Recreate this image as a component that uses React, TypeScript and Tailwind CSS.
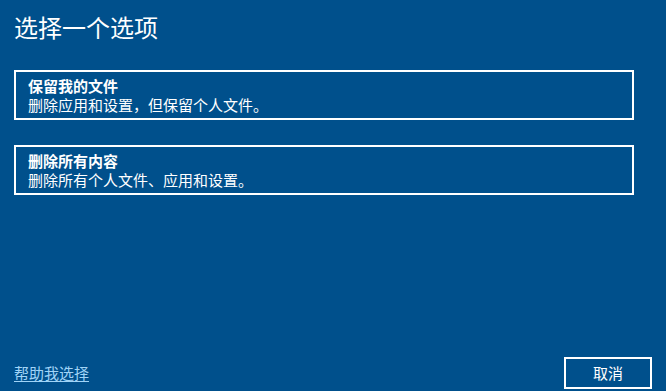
import React from "react";

const font = {
  fontFamily: '"Noto Sans CJK SC", "Noto Sans", sans-serif',
};

function Option({ title, desc }: { title: string; desc: string }) {
  return (
    <button className="w-[620px] h-[50px] border-2 border-white px-[12px] py-[4px] text-left text-white flex flex-col">
      <span className="text-[15px] leading-[19px] font-bold">{title}</span>
      <span className="text-[15px] leading-[19px]">{desc}</span>
    </button>
  );
}

export default function App() {
  return (
    <div
      className="h-[391px] w-[666px] bg-[#00508c] text-white flex flex-col pl-[14px] pr-[14px] pb-[2px]"
      style={font}
    >
      <h1 className="text-[24px] leading-[32px] mt-[11px]">选择一个选项</h1>
      <div className="mt-[27px] flex flex-col gap-[25px]">
        <Option title="保留我的文件" desc="删除应用和设置，但保留个人文件。" />
        <Option title="删除所有内容" desc="删除所有个人文件、应用和设置。" />
      </div>
      <div className="mt-auto flex items-end justify-between">
        <a
          href="#"
          className="mb-[6px] text-[15px] leading-[20px] text-[#a0d4f7] underline underline-offset-2"
        >
          帮助我选择
        </a>
        <button className="w-[88px] h-[32px] border-2 border-white text-[15px] text-white">
          取消
        </button>
      </div>
    </div>
  );
}
